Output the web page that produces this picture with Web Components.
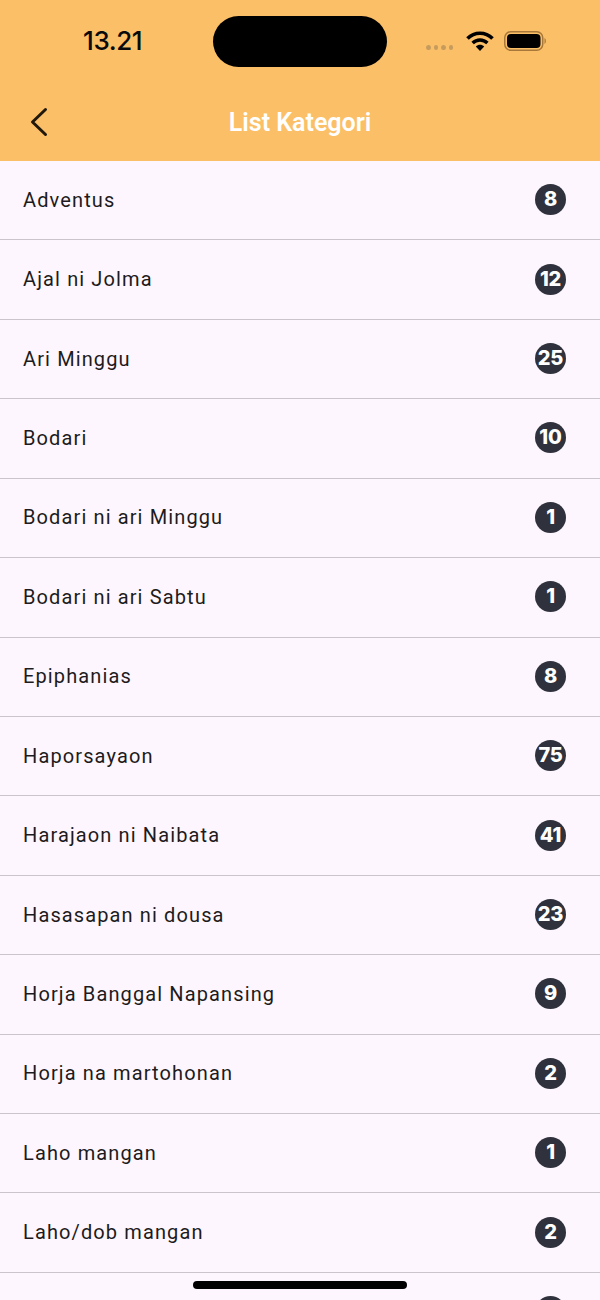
<!DOCTYPE html>
<html><head><meta charset="utf-8"><style>
html,body{margin:0;padding:0;height:1300px;overflow:hidden;background:#fdf6fe;font-family:Roboto,sans-serif}
</style></head><body>
<kategori-app></kategori-app>
<script>
class StatusBar extends HTMLElement{constructor(){super();this.attachShadow({mode:'open'}).innerHTML=`<style>
:host{display:flex;align-items:flex-start;height:84px;box-sizing:border-box;padding-top:16px;position:relative}
.time{width:213px;box-sizing:border-box;padding:9px 0 0 83px;font:500 26px/32px Inter,Roboto,sans-serif;letter-spacing:-.4px;color:#0a0a0a;white-space:nowrap}
.island{width:174px;height:51px;border-radius:25.5px;background:#000;flex:none}
.right{display:flex;align-items:flex-start;margin-left:39px}
.dots{display:flex;gap:3px;margin-top:29px}.dots i{width:4.5px;height:5px;border-radius:50%;background:#c69c5e;display:block}
svg{display:block}
.wifi{margin:14px 0 0 13px}.bat{margin:15px 0 0 10px}
</style><div class="time">13.21</div><div class="island"></div><div class="right"><div class="dots"><i></i><i></i><i></i><i></i></div>
<svg class="wifi" width="28" height="22" viewBox="0 0 28 22"><path d="M1.5 8.6C8.5 1.4 19.5 1.4 26.5 8.6" fill="none" stroke="#000" stroke-width="3.6"/><path d="M6.6 13C10.8 8.9 17.2 8.9 21.4 13" fill="none" stroke="#000" stroke-width="3.4"/><path d="M9.8 16.4C12.2 14.2 15.8 14.2 18.2 16.4L14 21Z" fill="#000"/></svg>
<svg class="bat" width="43" height="20" viewBox="0 0 43 20"><rect x=".75" y=".75" width="38" height="18.5" rx="6" fill="none" stroke="#a8783a" stroke-width="1.5"/><rect x="3" y="3" width="33.5" height="14" rx="4" fill="#000"/><path d="M40.5 7c1.8.5 1.8 5.5 0 6z" fill="#a8783a"/></svg></div>`}}
customElements.define('status-bar',StatusBar);

class AppBar extends HTMLElement{constructor(){super();this.attachShadow({mode:'open'}).innerHTML=`<style>
:host{display:flex;align-items:center;height:77px;position:relative;justify-content:center}
.back{position:absolute;left:28px;top:23px}
.t{font:600 25px/30px Roboto,sans-serif;color:#fff}
</style><svg class="back" width="22" height="30" viewBox="0 0 22 30"><path d="M17.5 2.5 4.5 15 17.5 27.5" fill="none" stroke="#21180c" stroke-width="3" stroke-linecap="round" stroke-linejoin="round"/></svg><div class="t"><slot></slot></div>`}}
customElements.define('app-bar',AppBar);

class CategoryRow extends HTMLElement{constructor(){super();this.attachShadow({mode:'open'}).innerHTML=`<style>
:host{display:flex;align-items:center;justify-content:space-between;height:79.43px;box-sizing:border-box;padding:0 34px 1px 23px;border-bottom:1.3px solid #cac5cc;color:#1d1b20;flex:none}
.n{font:400 20px/28px Roboto,sans-serif;letter-spacing:1.12px}
.b{width:31px;height:31px;border-radius:50%;background:#2f323c;color:#fff;font:800 20px/31px Inter,Roboto,sans-serif;text-align:center;letter-spacing:-.2px}
</style><span class="n"><slot></slot></span><span class="b"></span>`}
connectedCallback(){this.shadowRoot.querySelector('.b').textContent=this.getAttribute('count')}}
customElements.define('category-row',CategoryRow);

class HomeBar extends HTMLElement{constructor(){super();this.attachShadow({mode:'open'}).innerHTML=`<style>:host{display:block;position:absolute;left:193px;top:1281px;width:214px;height:8px;border-radius:4px;background:#000}</style>`}}
customElements.define('home-bar',HomeBar);

const data=[['Adventus',8],['Ajal ni Jolma',12],['Ari Minggu',25],['Bodari',10],['Bodari ni ari Minggu',1],['Bodari ni ari Sabtu',1],['Epiphanias',8],['Haporsayaon',75],['Harajaon ni Naibata',41],['Hasasapan ni dousa',23],['Horja Banggal Napansing',9],['Horja na martohonan',2],['Laho mangan',1],['Laho/dob mangan',2],['','']];
class KategoriApp extends HTMLElement{constructor(){super();const s=this.attachShadow({mode:'open'});
s.innerHTML=`<style>:host{display:flex;flex-direction:column;width:600px;height:1300px;overflow:hidden;position:relative;background:#fdf6fe}
header{background:#fbbf67;flex:none}main{display:flex;flex-direction:column;flex:none}</style>
<header><status-bar></status-bar><app-bar>List Kategori</app-bar></header><main></main><home-bar></home-bar>`;
const m=s.querySelector('main');data.forEach(([n,c])=>{const r=document.createElement('category-row');r.setAttribute('count',c);r.textContent=n;m.appendChild(r)})}}
customElements.define('kategori-app',KategoriApp);
</script></body></html>
